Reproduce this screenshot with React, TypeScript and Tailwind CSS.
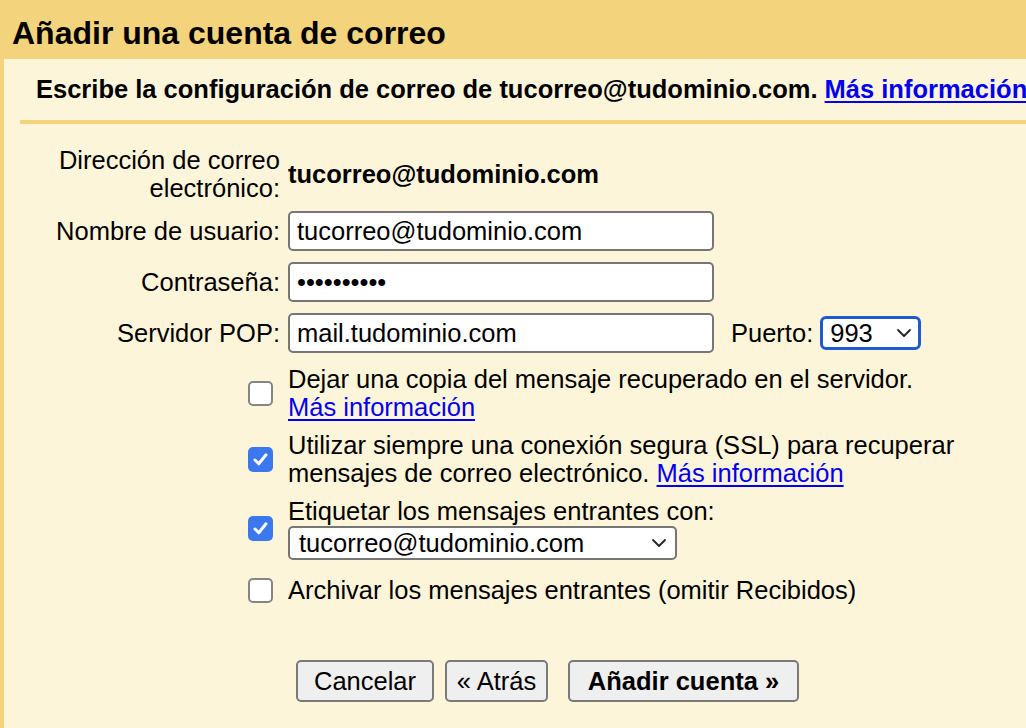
import React from "react";

const font = { fontFamily: '"Liberation Sans", Arial, Helvetica, sans-serif' };

const Chevron: React.FC = () => (
  <svg width="16" height="10" viewBox="0 0 16 10" fill="none">
    <path d="M2 2l6 6 6-6" stroke="#222" strokeWidth="1.8" strokeLinecap="round" strokeLinejoin="round" />
  </svg>
);

const Checkbox: React.FC<{ checked?: boolean }> = ({ checked }) =>
  checked ? (
    <div className="w-[25px] h-[25px] rounded-[5px] bg-[#3b78f0] flex items-center justify-center">
      <svg width="19" height="19" viewBox="0 0 19 19" fill="none">
        <path d="M4 10l3.8 3.8 7.2-9" stroke="#fff" strokeWidth="3" strokeLinecap="round" strokeLinejoin="round" />
      </svg>
    </div>
  ) : (
    <div className="w-[25px] h-[25px] rounded-[5px] bg-white border-2 border-[#858585]" />
  );

const Field: React.FC<{ value: string }> = ({ value }) => (
  <div className="w-[426px] h-[40px] border-2 border-[#767676] rounded-[5px] bg-white pl-[7px] flex items-center">
    {value}
  </div>
);

const Link: React.FC<{ children: React.ReactNode }> = ({ children }) => (
  <a className="text-[#0000ee] underline underline-offset-[3px] decoration-2 cursor-pointer">{children}</a>
);

export default function App() {
  return (
    <div className="w-[1026px] h-[728px] overflow-hidden bg-[#f3d37b] flex flex-col text-black" style={font}>
      {/* header */}
      <div className="h-[59px] shrink-0 flex items-center pl-[12px] pt-[6px]">
        <h1 className="text-[32px] font-bold whitespace-nowrap">Añadir una cuenta de correo</h1>
      </div>

      {/* panel */}
      <div className="flex-1 ml-[4px] bg-[#fdf5da] text-[25.5px] leading-[28px] flex flex-col">
        <div className="pt-[16px] pl-[32px] font-bold whitespace-nowrap">
          Escribe la configuración de correo de tucorreo@tudominio.com. <Link>Más información</Link>
        </div>
        <div className="mt-[17px] ml-[16px] h-[4px] bg-[#f3d37b]" />

        {/* email */}
        <div className="mt-[22px] flex items-center gap-2">
          <div className="w-[276px] text-right">
            Dirección de correo
            <br />
            electrónico:
          </div>
          <div className="font-bold">tucorreo@tudominio.com</div>
        </div>

        <div className="mt-[9px] flex items-center gap-2">
          <div className="w-[276px] text-right">Nombre de usuario:</div>
          <Field value="tucorreo@tudominio.com" />
        </div>

        <div className="mt-[11px] flex items-center gap-2">
          <div className="w-[276px] text-right">Contraseña:</div>
          <Field value="••••••••••" />
        </div>

        <div className="mt-[11px] flex items-center gap-2">
          <div className="w-[276px] text-right">Servidor POP:</div>
          <Field value="mail.tudominio.com" />
          <div className="ml-[9px] flex items-center">
            <span>Puerto:</span>
            <div className="ml-[7px] w-[101px] h-[34px] border-[3px] border-[#2159cf] rounded-[6px] bg-white flex items-center justify-between pl-[7px] pr-[6px]">
              <span>993</span>
              <Chevron />
            </div>
          </div>
        </div>

        {/* options */}
        <div className="mt-[12px] flex items-center gap-2">
          <div className="w-[276px] flex justify-end pr-[7px]">
            <Checkbox />
          </div>
          <div>
            Dejar una copia del mensaje recuperado en el servidor.
            <br />
            <Link>Más información</Link>
          </div>
        </div>

        <div className="mt-[10px] flex items-center gap-2">
          <div className="w-[276px] flex justify-end pr-[7px]">
            <Checkbox checked />
          </div>
          <div>
            Utilizar siempre una conexión segura (SSL) para recuperar
            <br />
            mensajes de correo electrónico. <Link>Más información</Link>
          </div>
        </div>

        <div className="mt-[10px] flex items-center gap-2">
          <div className="w-[276px] flex justify-end pr-[7px]">
            <Checkbox checked />
          </div>
          <div>
            <div>Etiquetar los mensajes entrantes con:</div>
            <div className="mt-px w-[389px] h-[34px] border-2 border-[#767676] rounded-[5px] bg-white flex items-center justify-between pl-[9px] pr-[8px]">
              <span>tucorreo@tudominio.com</span>
              <Chevron />
            </div>
          </div>
        </div>

        <div className="mt-[16px] flex items-center gap-2">
          <div className="w-[276px] flex justify-end pr-[7px]">
            <Checkbox />
          </div>
          <div>Archivar los mensajes entrantes (omitir Recibidos)</div>
        </div>

        {/* buttons */}
        <div className="mt-[56px] ml-[292px] flex items-center">
          <button className="w-[138px] h-[42px] border-2 border-[#7a7a7a] rounded-[5px] bg-[#efefef]">Cancelar</button>
          <button className="ml-[11px] w-[103px] h-[42px] border-2 border-[#7a7a7a] rounded-[5px] bg-[#efefef]">« Atrás</button>
          <button className="ml-[20px] w-[231px] h-[42px] border-2 border-[#7a7a7a] rounded-[5px] bg-[#efefef] font-bold">
            Añadir cuenta »
          </button>
        </div>
      </div>
    </div>
  );
}
